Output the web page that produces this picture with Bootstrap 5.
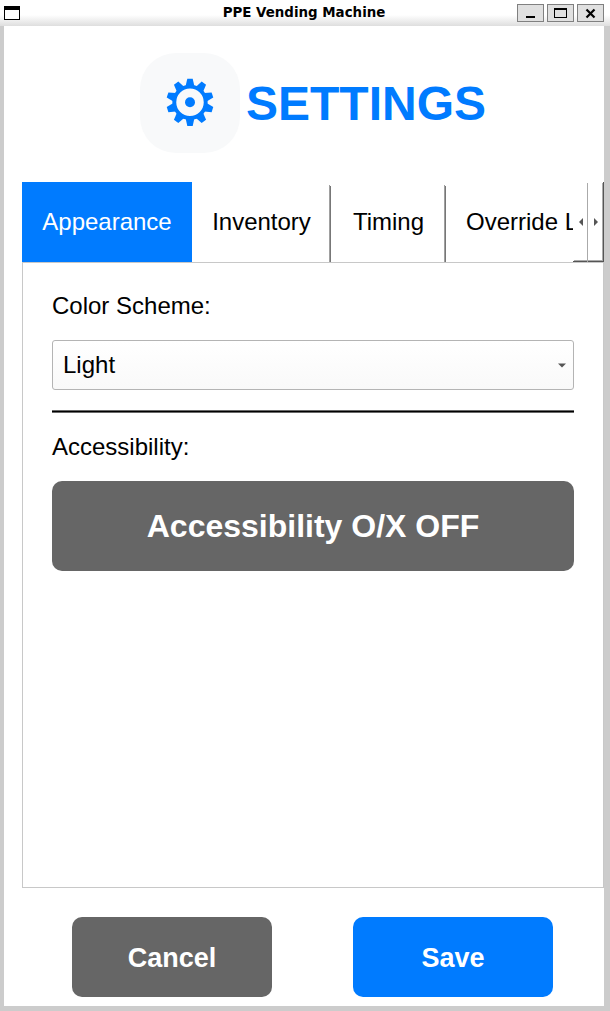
<!DOCTYPE html>
<html lang="en">
<head>
<meta charset="utf-8">
<title>PPE Vending Machine</title>
<link href="https://cdn.jsdelivr.net/npm/bootstrap@5.3.0/dist/css/bootstrap.min.css" rel="stylesheet">
<style>
body{width:610px;height:1011px;background:#ccc;color:#000;font:24px/28px "Liberation Sans",Arial,sans-serif;overflow:hidden}
svg{display:block}
.titlebar{height:26px;padding:0 6px 0 4px;background:linear-gradient(#fff 0,#fff 15px,#dedede 26px);font:bold 13.4px/26px "DejaVu Sans",sans-serif}
.side{width:87px}
.win-btn{width:27px;height:18px;border:1px solid #808080;background:#e0e0e0;padding:0;border-radius:0}
.client{height:980px;margin:0 6px 0 4px;background:#fff;padding-left:18px}
.heading{height:156px;padding:27px 0 0 118px;gap:6px}
.gear{width:100px;height:100px;border-radius:36px;background:#f8f9fa;color:#007bff}
h1{font-size:48px;line-height:102px;font-weight:700;color:#007bff;margin:0}
.tabs{height:80px}
.tab-item{height:80px;padding:0;border:0;background:none;line-height:80px;color:#000;text-align:center;flex:none;white-space:nowrap}
.tab-item.active{background:#007bff;color:#fff;width:170px}
.tab-item.inv{width:139px}
.tab-item.time{width:115px}
.tab-item.over{width:127px;padding-left:20px;text-align:left;overflow:hidden}
.edge{background:linear-gradient(#a0a0a0,#a0a0a0) right 1px top 3px/1px 77px no-repeat,linear-gradient(#777,#777) right 0 top 4px/1px 76px no-repeat}
.pane{height:626px;border:1px solid #c8c8c8;padding:29px 29px 0}
.combo{height:50px;margin-top:20px;padding:0 7px 0 10px;border:1px solid #b4b4b4;border-radius:3px;background:linear-gradient(#fff,#f9f9f9)}
.rule{height:3px;margin:20px 0;background:linear-gradient(#686868 0 1px,#000 1px 2px,#686868 2px)}
.action{border:0;border-radius:10px;background:#666;color:#fff;font-weight:700;padding:0}
.action.wide{width:100%;height:90px;margin-top:20px;font-size:32px}
.footer-row{padding:29px 51px 0 50px}
.footer-row .action{width:200px;height:80px;font-size:27px;padding-top:2px}
.footer-row .save{background:#007bff}
</style>
</head>
<body>
<header class="titlebar d-flex justify-content-between">
  <div class="side pt-1"><svg width="16" height="16" shape-rendering="crispEdges"><path d="M0 2h16v14H0z"/><path fill="#fff" d="M1 6h14v9H1z"/></svg></div>
  <div>PPE Vending Machine</div>
  <div class="side d-flex pt-1" style="gap:3px">
    <button class="win-btn" aria-label="Minimize"><svg width="25" height="16" shape-rendering="crispEdges"><path d="M8 11h9v2H8z"/></svg></button>
    <button class="win-btn" aria-label="Maximize"><svg width="25" height="16" shape-rendering="crispEdges"><path fill-rule="evenodd" d="M6 3h13v10H6zM7 5v7h11V5z"/></svg></button>
    <button class="win-btn" aria-label="Close"><svg width="25" height="16"><path d="M8.5 4.5l8 8m0-8l-8 8" stroke="#000" stroke-width="2.2"/></svg></button>
  </div>
</header>
<main class="client">
  <div class="heading d-flex">
    <div class="gear">
      <svg width="100" height="100" viewBox="-50 -49.3 100 100" fill="currentColor">
        <defs><path id="tooth" d="M-4.3-16.5L-2.7-23.6H2.7L4.3-16.5z"/></defs>
        <circle r="15.7" fill="none" stroke="currentColor" stroke-width="3.9"/>
        <circle r="5"/>
        <use href="#tooth"/><use href="#tooth" transform="rotate(36)"/><use href="#tooth" transform="rotate(72)"/><use href="#tooth" transform="rotate(108)"/><use href="#tooth" transform="rotate(144)"/><use href="#tooth" transform="rotate(180)"/><use href="#tooth" transform="rotate(216)"/><use href="#tooth" transform="rotate(252)"/><use href="#tooth" transform="rotate(288)"/><use href="#tooth" transform="rotate(324)"/>
      </svg>
    </div>
    <h1>SETTINGS</h1>
  </div>
  <nav class="tabs d-flex">
    <button class="tab-item active">Appearance</button>
    <button class="tab-item inv edge">Inventory</button>
    <button class="tab-item time edge">Timing</button>
    <button class="tab-item over">Override L</button>
    <svg width="31" height="80" shape-rendering="crispEdges">
      <path fill="#aaa" d="M14 1h1v77h-1zM29 1h1v77h-1zM1 78h30v1H1z"/>
      <path fill="#555" d="M30 0h1v80h-1zM0 79h31v1H0z"/>
      <path fill="#aaa" d="M14 78h1v2h-1z"/>
      <path fill="#555" shape-rendering="auto" d="M6 40l4-4v8zM25 40l-4-4v8z"/>
    </svg>
  </nav>
  <section class="pane">
    <div>Color Scheme:</div>
    <div class="combo d-flex align-items-center justify-content-between"><span>Light</span>
      <svg width="8" height="5"><path fill="#555" d="M0 .5h8l-4 4z"/></svg></div>
    <div class="rule"></div>
    <div>Accessibility:</div>
    <button class="action wide">Accessibility O/X OFF</button>
  </section>
  <div class="footer-row d-flex justify-content-between">
    <button class="action">Cancel</button>
    <button class="action save">Save</button>
  </div>
</main>
<script src="https://cdn.jsdelivr.net/npm/bootstrap@5.3.0/dist/js/bootstrap.bundle.min.js"></script>
</body>
</html>
